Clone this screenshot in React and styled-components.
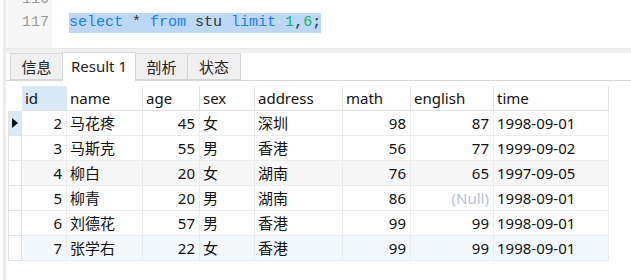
import React from "react";
import styled, { createGlobalStyle } from "styled-components";

const GlobalStyle = createGlobalStyle`
  body {
    margin: 0;
    background: #fff;
    font-family: "Noto Sans", "Noto Sans CJK SC", sans-serif;
  }
`;

const Window = styled.div`
  display: flex;
  flex-direction: column;
  height: 280px;
  margin-left: 3px;
  border-left: 3px solid #ececec;
  overflow: hidden;
`;

const Editor = styled.div`
  display: flex;
  height: 48px;
  flex-shrink: 0;
  overflow: hidden;
  border-bottom: 1px solid #e6e6e6;
  font-family: "Liberation Mono", "DejaVu Sans Mono", monospace;
  font-size: 15px;
`;

const Gutter = styled.div`
  width: 46px;
  flex-shrink: 0;
  background: #f7f7f7;
`;

const Lines = styled.div`
  margin-top: -12px;
`;

const LineNo = styled.div`
  height: 23px;
  line-height: 23px;
  padding-right: 3px;
  text-align: right;
  color: #9a9a9a;
`;

const Code = styled.div`
  flex: 1;
  padding-left: 17px;
`;

const CodeLine = styled.div`
  height: 23px;
  line-height: 23px;
  white-space: pre;
  color: #333;
`;

const Selection = styled.span`
  background: #bcd8f7;
  padding: 1px 0 2px;
`;

const Token = styled.span`
  color: ${(p) => (p.$kind === "kw" ? "#1a7cff" : p.$kind === "num" ? "#11b55a" : "#333")};
`;

const Splitter = styled.div`
  height: 4px;
  flex-shrink: 0;
  background: #f0f0f0;
`;

const TabBar = styled.div`
  display: flex;
  align-items: flex-end;
  height: 27px;
  padding-left: 4px;
  border-bottom: 1px solid #d9d9d9;
`;

const Tab = styled.div`
  width: ${(p) => p.$w}px;
  height: ${(p) => (p.$active ? 29 : 27)}px;
  margin-bottom: ${(p) => (p.$active ? -1 : 0)}px;
  box-sizing: border-box;
  display: flex;
  align-items: center;
  justify-content: center;
  padding-bottom: ${(p) => (p.$active ? 2 : 0)}px;
  border: 1px solid #d6d6d6;
  border-bottom: ${(p) => (p.$active ? "none" : "1px solid #d6d6d6")};
  margin-left: -1px;
  background: ${(p) => (p.$active ? "#fff" : "#f0f0f0")};
  color: #222;
  font-size: 15px;
  &:first-child {
    margin-left: 0;
  }
`;

const Grid = styled.div`
  display: grid;
  grid-template-columns: 14px 45px 76px 57px 55px 88px 68px 83px 115px;
  grid-auto-rows: 25px;
  margin: 5px 0 0 2px;
  font-size: 15px;
  color: #111;
`;

const Head = styled.div`
  box-sizing: border-box;
  padding-left: 3px;
  line-height: 24px;
  border-right: 1px solid #e2e2e2;
  border-bottom: 1px solid #e2e2e2;
  background: ${(p) => (p.$hl ? "#dae9f7" : "#fff")};
`;

const Corner = styled.div``;

const Marker = styled.div`
  box-sizing: border-box;
  display: flex;
  align-items: center;
  padding-left: 3px;
  border-left: 1px solid #e2e2e2;
  border-right: 1px solid #e2e2e2;
  border-bottom: 1px solid #e2e2e2;
  background: ${(p) => (p.$current ? "#dae9f7" : "#fff")};
`;

const Arrow = styled.div`
  width: 0;
  height: 0;
  border-top: 5px solid transparent;
  border-bottom: 5px solid transparent;
  border-left: 6px solid #111;
`;

const Cell = styled.div`
  box-sizing: border-box;
  padding: 0 4px 0 3px;
  line-height: 24px;
  white-space: nowrap;
  overflow: hidden;
  text-align: ${(p) => (p.$num ? "right" : "left")};
  color: ${(p) => (p.$null ? "#b9c3d3" : "#111")};
  border-right: 1px solid #ececec;
  border-bottom: 1px solid #ececec;
  background: ${(p) => p.$bg};
`;

const columns = [
  { key: "id", num: true },
  { key: "name" },
  { key: "age", num: true },
  { key: "sex" },
  { key: "address" },
  { key: "math", num: true },
  { key: "english", num: true },
  { key: "time" },
];

const rows = [
  { id: 2, name: "马花疼", age: 45, sex: "女", address: "深圳", math: 98, english: 87, time: "1998-09-01" },
  { id: 3, name: "马斯克", age: 55, sex: "男", address: "香港", math: 56, english: 77, time: "1999-09-02" },
  { id: 4, name: "柳白", age: 20, sex: "女", address: "湖南", math: 76, english: 65, time: "1997-09-05" },
  { id: 5, name: "柳青", age: 20, sex: "男", address: "湖南", math: 86, english: null, time: "1998-09-01" },
  { id: 6, name: "刘德花", age: 57, sex: "男", address: "香港", math: 99, english: 99, time: "1998-09-01" },
  { id: 7, name: "张学右", age: 22, sex: "女", address: "香港", math: 99, english: 99, time: "1998-09-01" },
];

const rowBg = ["#fff", "#fff", "#f7f7f7", "#fff", "#fff", "#f3f8fd"];

const App = () => (
  <>
    <GlobalStyle />
    <Window>
      <Editor>
        <Gutter>
          <Lines>
            <LineNo>116</LineNo>
            <LineNo>117</LineNo>
          </Lines>
        </Gutter>
        <Code>
          <Lines>
            <CodeLine />
            <CodeLine>
              <Selection>
                <Token $kind="kw">select</Token> * <Token $kind="kw">from</Token> stu{" "}
                <Token $kind="kw">limit</Token> <Token $kind="num">1</Token>,
                <Token $kind="num">6</Token>;
              </Selection>
            </CodeLine>
          </Lines>
        </Code>
      </Editor>
      <Splitter />
      <TabBar>
        <Tab $w={53}>信息</Tab>
        <Tab $w={74} $active>Result 1</Tab>
        <Tab $w={53}>剖析</Tab>
        <Tab $w={54}>状态</Tab>
      </TabBar>
      <Grid>
        <Corner />
        {columns.map((c) => (
          <Head key={c.key} $hl={c.key === "id"}>
            {c.key}
          </Head>
        ))}
        {rows.map((r, i) => (
          <React.Fragment key={r.id}>
            <Marker $current={i === 0}>{i === 0 && <Arrow />}</Marker>
            {columns.map((c) => (
              <Cell key={c.key} $num={c.num} $null={r[c.key] === null} $bg={rowBg[i]}>
                {r[c.key] === null ? "(Null)" : r[c.key]}
              </Cell>
            ))}
          </React.Fragment>
        ))}
      </Grid>
    </Window>
  </>
);

export default App;
